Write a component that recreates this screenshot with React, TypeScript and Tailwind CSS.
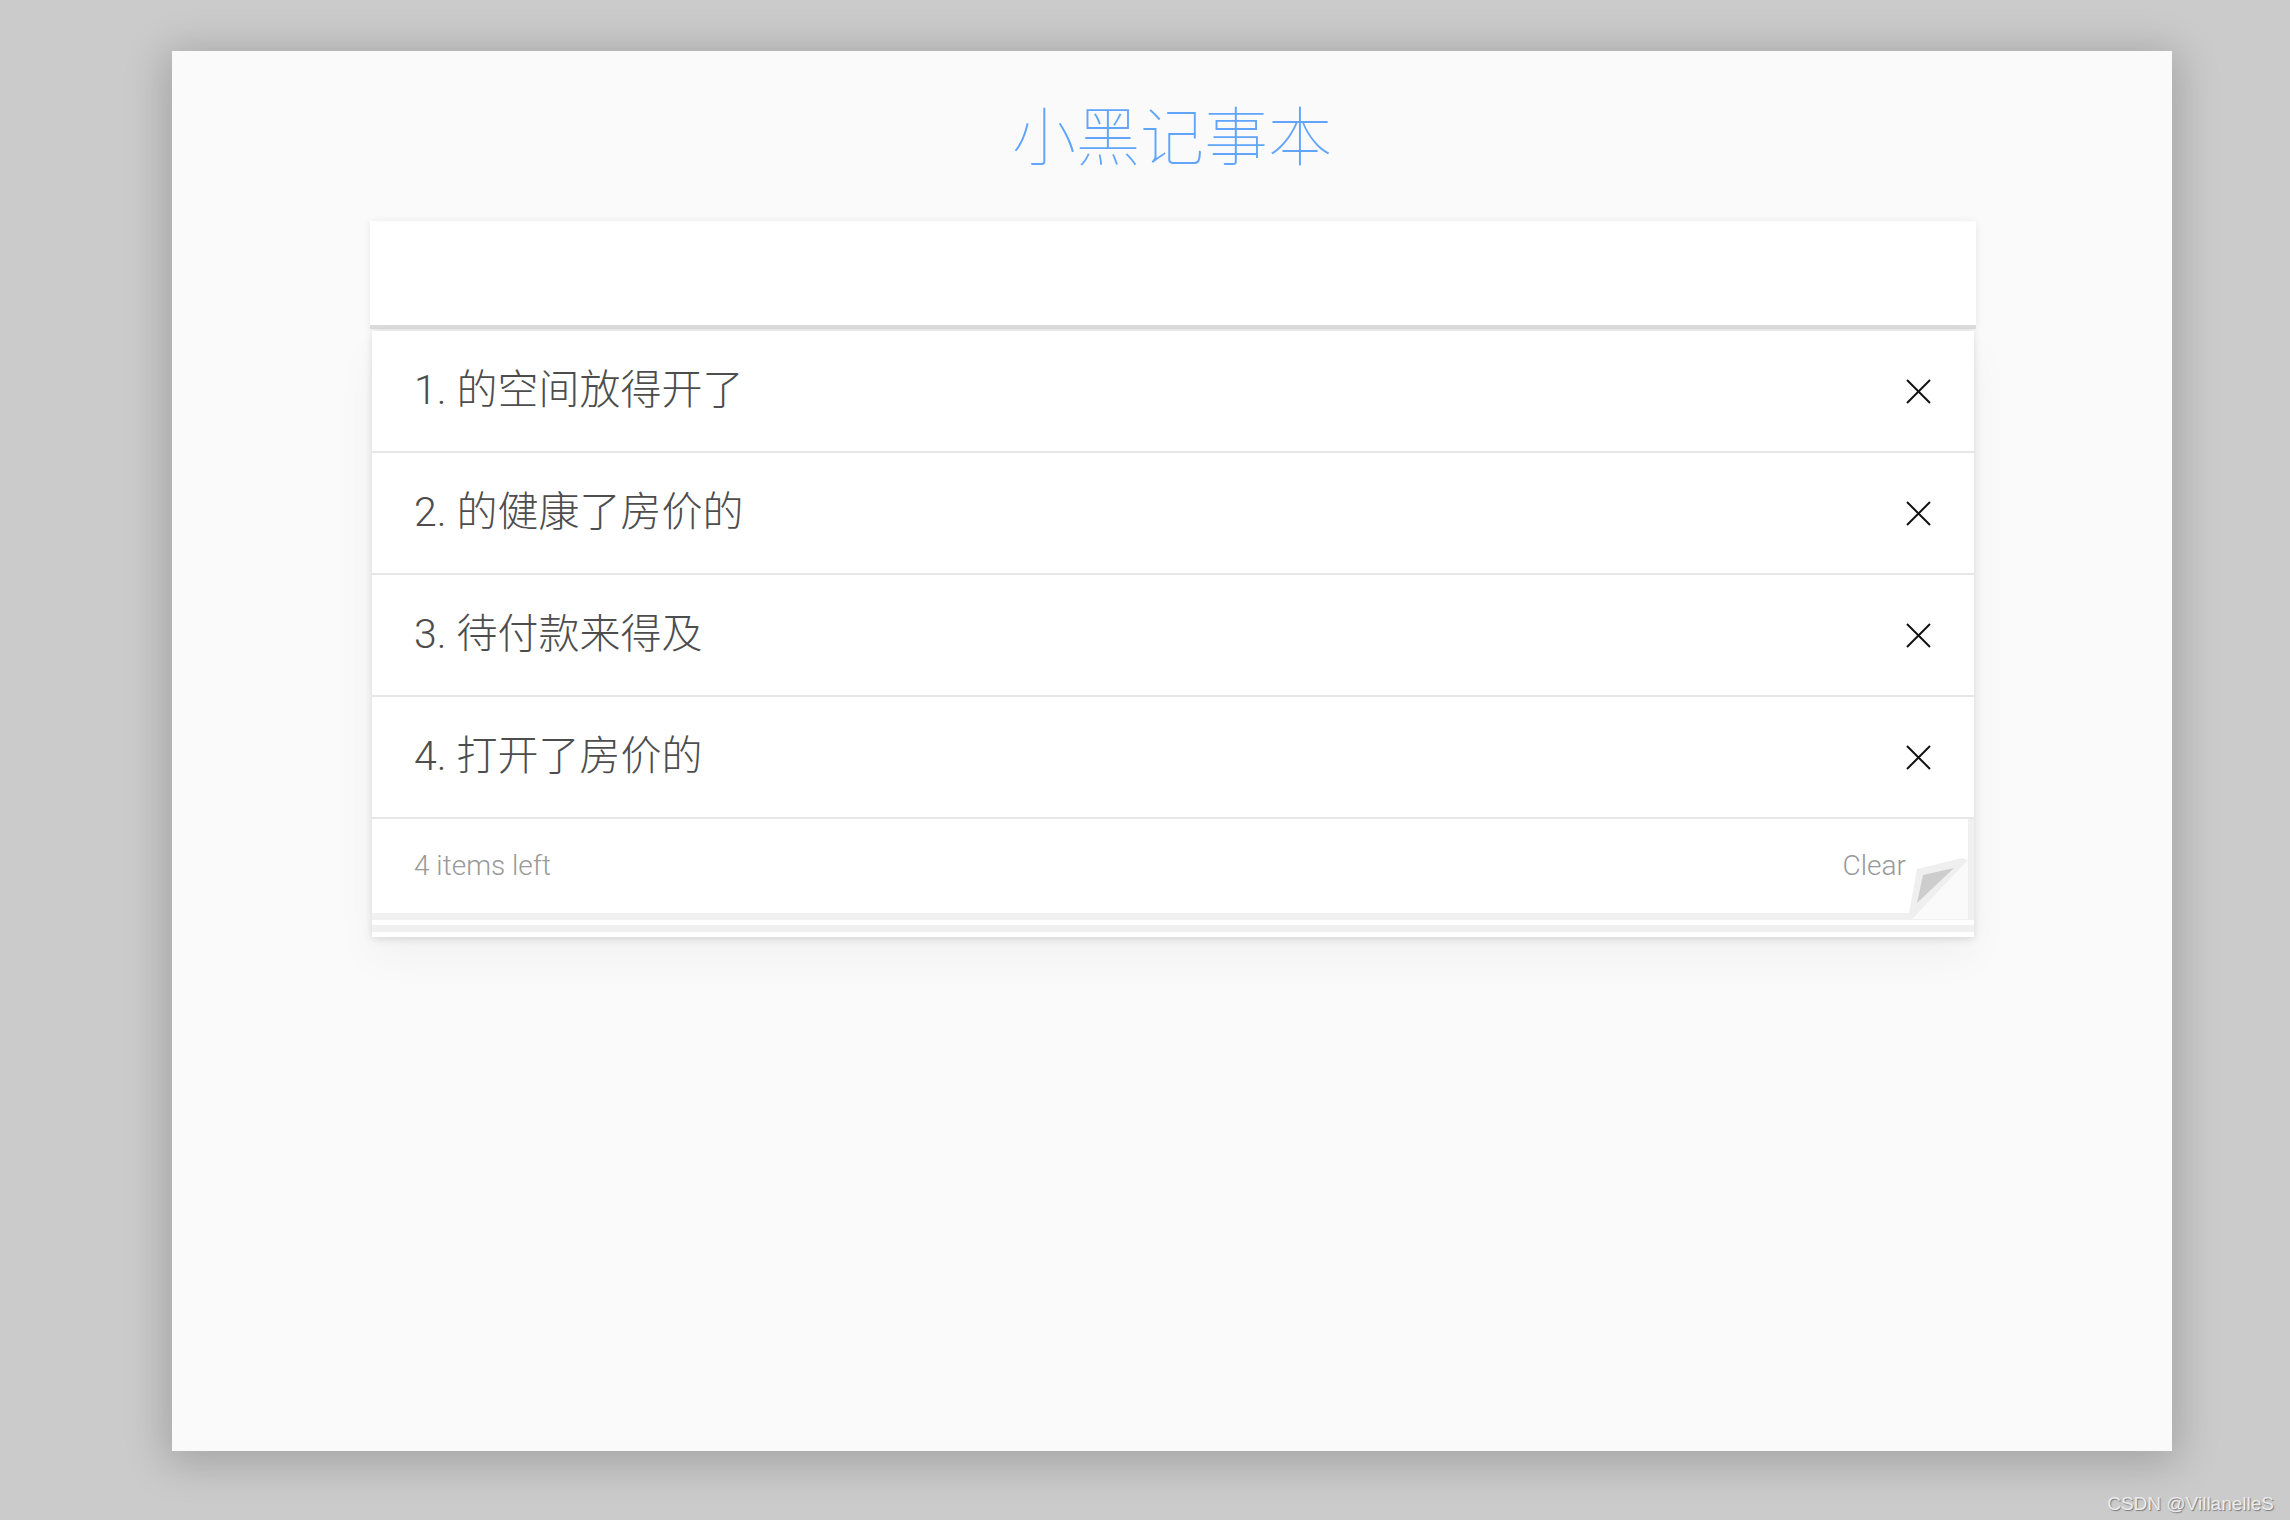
import React from 'react';

const TODOS = ['的空间放得开了', '的健康了房价的', '待付款来得及', '打开了房价的'];

const FONT = "font-['Roboto','Noto_Sans_CJK_SC',sans-serif]";

const CloseIcon = () => (
  <svg width="25" height="25" viewBox="0 0 25 25" className="shrink-0">
    <line x1="1" y1="1" x2="24" y2="24" stroke="#111" strokeWidth="2" />
    <line x1="24" y1="1" x2="1" y2="24" stroke="#111" strokeWidth="2" />
  </svg>
);

// folded corner at the footer's bottom right
const PageCurl = () => (
  <svg width="62" height="62" viewBox="0 0 62 62" className="absolute right-0 bottom-[-6px]">
    <polygon points="62,3 62,62 6,62" fill="#fafafa" />
    <polygon points="3,56 11,12 56,1 62,3 6,62 0,62" fill="#efefef" />
    <polygon points="17,18 48,11 11,46" fill="#cdcdcd" />
  </svg>
);

export default function App() {
  return (
    <div className={`relative w-[2290px] h-[1520px] bg-[#cbcbcb] pt-[51px] pl-[172px] ${FONT}`}>
      {/* Window */}
      <div className="w-[2000px] h-[1400px] bg-[#fafafa] shadow-[0_6px_40px_6px_rgba(0,0,0,0.2)] flex flex-col">
        <h1 className="pt-[56px] text-center text-[64px] leading-[64px] font-thin text-[#60a5fa]">
          小黑记事本
        </h1>

        <div className="w-[1606px] ml-[198px] mt-[50px]">
          {/* Input */}
          <div className="h-[108px] bg-white border-b-[4px] border-[#dbdbdb] shadow-[0_1px_8px_rgba(0,0,0,0.08)]" />

          {/* List */}
          <div className="mx-[2px] mt-[2px] bg-white shadow-[0_2px_8px_rgba(0,0,0,0.12),0_20px_40px_rgba(0,0,0,0.04)]">
            {TODOS.map((todo, i) => (
              <div
                key={i}
                className="h-[122px] border-b-2 border-[#e6e6e6] flex items-center justify-between pl-[42px] pr-[43px]"
              >
                <span className="text-[41px] font-light text-[#4d4d4d]">
                  {i + 1}.<span className="ml-[10px]">{todo}</span>
                </span>
                <CloseIcon />
              </div>
            ))}

            {/* Footer */}
            <div className="relative h-[94px] border-r-[6px] border-[#f0f0f0] flex items-center justify-between pl-[42px] pr-[62px] text-[28px] font-light text-[#999]">
              <span>4 items left</span>
              <span>Clear</span>
              <PageCurl />
            </div>
            <div className="h-[7px] bg-[#f0f0f0]" />
            <div className="h-[5px] bg-white" />
            <div className="h-[7px] bg-[#f0f0f0]" />
            <div className="h-[5px] bg-white" />
          </div>
        </div>
      </div>

      {/* Watermark */}
      <div className="absolute right-[16px] bottom-[7px] text-[19px] leading-none text-[#ececec] font-['Liberation_Sans',sans-serif] [text-shadow:1px_1px_1px_#7a7a7a]">
        CSDN @VillanelleS
      </div>
    </div>
  );
}
